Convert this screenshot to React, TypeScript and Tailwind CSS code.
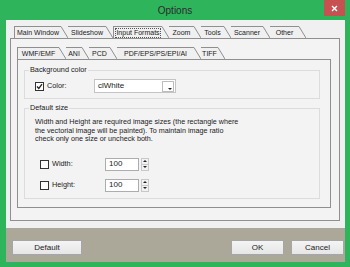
import React from "react";

const F = "font-['Liberation_Sans',Arial,sans-serif]";

function Tab({
  label,
  w,
  first,
  active,
  focus,
  slant = 7,
}: {
  label: string;
  w: number;
  first?: boolean;
  active?: boolean;
  focus?: boolean;
  slant?: number;
}) {
  return (
    <div className="flex h-[12px] shrink-0">
      <div
        style={{ width: w }}
        className={
          "h-full flex items-center justify-center border-t border-[#8e8f8f] bg-[#f0f0f0] whitespace-nowrap " +
          (first || active ? "border-l " : "")
        }
      >
        <span
          className={
            "leading-[8px] text-[7px] " +
            (focus ? "outline outline-1 outline-dotted outline-[#555]" : "")
          }
        >
          {label}
        </span>
      </div>
      <svg width={slant} height={12} className="block">
        <polygon points={`0,0 0,12 ${slant},12`} fill="#f0f0f0" />
        <line x1={0} y1={0.5} x2={slant} y2={12} stroke="#8e8f8f" strokeWidth={1} />
      </svg>
    </div>
  );
}

function CheckBox({ checked }: { checked?: boolean }) {
  return (
    <div className="w-[9px] h-[9px] border border-[#333] bg-white flex items-center justify-center shrink-0">
      {checked && (
        <svg width="7" height="7" viewBox="0 0 7 7">
          <path d="M1 3.5 L2.8 5.5 L6 1.2" stroke="#222" strokeWidth="1.3" fill="none" />
        </svg>
      )}
    </div>
  );
}

function SpinEdit({ value }: { value: string }) {
  return (
    <div className="flex items-center gap-[2px]">
      <div className="w-[34px] h-[13px] border border-[#abadb3] bg-white flex items-center pl-[3px] text-[8px]">
        {value}
      </div>
      <div className="flex flex-col w-[8px] h-[13px] border border-[#c8c8c8] bg-[#f2f2f2]">
        <div className="flex-1 flex items-center justify-center border-b border-[#c8c8c8]">
          <svg width="4" height="2"><polygon points="0,2 4,2 2,0" fill="#222" /></svg>
        </div>
        <div className="flex-1 flex items-center justify-center">
          <svg width="4" height="2"><polygon points="0,0 4,0 2,2" fill="#222" /></svg>
        </div>
      </div>
    </div>
  );
}

function Button({ label, w }: { label: string; w: number }) {
  return (
    <div
      style={{ width: w }}
      className="h-[15px] border border-[#a6a6a6] bg-gradient-to-b from-[#f4f4f4] to-[#e6e6e6] flex items-center justify-center text-[8px] text-[#222]"
    >
      {label}
    </div>
  );
}

export default function App() {
  return (
    <div className={`${F} w-[350px] h-[267px] bg-[#2eb55b] flex flex-col text-[7.3px] text-[#1a1a1a] overflow-hidden`}>
      {/* title bar */}
      <div className="h-[20px] relative flex items-center justify-center shrink-0">
        <span className="text-[10px] text-[#2b2b2b]">Options</span>
        <div className="absolute right-[5px] top-0 w-[21px] h-[16px] bg-[#c75050] flex items-center justify-center">
          <svg width="7" height="7" viewBox="0 0 7 7">
            <path d="M1 1 L6 6 M6 1 L1 6" stroke="#fff" strokeWidth="1.4" />
          </svg>
        </div>
      </div>

      <div className="mx-[6px] mr-[5px] mb-[5px] flex-1 flex flex-col">
        {/* upper area */}
        <div className="flex-1 bg-[#f0f0f0] flex flex-col pl-[4px] pr-[5px] pt-[6px] pb-[7px]">
          <div className="flex pl-[4px]">
            <Tab label="Main Window" w={47} first />
            <Tab label="Slideshow" w={38} />
            <Tab label="Input Formats" w={49} active focus />
            <Tab label="Zoom" w={25} />
            <Tab label="Tools" w={23} />
            <Tab label="Scanner" w={32} />
            <Tab label="Other" w={29} />
          </div>
          <div className="flex-1 border border-[#8e8f8f] bg-[#f3f3f3] flex flex-col pl-[6px] pr-[8px] pt-[8px] pb-[12px]">
            <div className="flex">
              <Tab label="WMF/EMF" w={42} first active />
              <Tab label="ANI" w={16} />
              <Tab label="PCD" w={21} />
              <Tab label="PDF/EPS/PS/EPI/AI" w={77} />
              <Tab label="TIFF" w={17} />
            </div>
            <div className="flex-1 border border-[#8e8f8f] bg-[#f3f3f3] flex flex-col pl-[6px] pr-[10px] pt-[5px]">
              <fieldset className="border border-[#dcdcdc] pl-[10px] h-[34px] shrink-0">
                <legend className="px-[1px] ml-[-6px] leading-[10px]">Background color</legend>
                <div className="flex items-center mt-[4px]">
                  <CheckBox checked />
                  <span className="ml-[3px] w-[47px]">Color:</span>
                  <div className="w-[82px] h-[14px] border border-[#c4c4c4] bg-white flex items-center pl-[3px] pr-[1px] text-[8px]">
                    <span className="flex-1">clWhite</span>
                    <div className="w-[12px] h-[11px] border border-[#bdbdbd] bg-white flex items-end justify-end p-[1px]">
                      <svg width="4" height="2"><polygon points="0,0 4,0 2,2" fill="#222" /></svg>
                    </div>
                  </div>
                </div>
              </fieldset>
              <fieldset className="border border-[#dcdcdc] pl-[10px] mt-[4px] h-[96px] shrink-0">
                <legend className="px-[1px] ml-[-6px] leading-[10px]">Default size</legend>
                <div className="leading-[8.5px] mt-[5px] text-[7.2px]">
                  Width and Height are required image sizes (the rectangle where
                  <br />
                  the vectorial image will be painted). To maintain image ratio
                  <br />
                  check only one size or uncheck both.
                </div>
                <div className="flex flex-col gap-[8px] pl-[5px] mt-[14px]">
                  <div className="flex items-center">
                    <CheckBox />
                    <span className="ml-[3px] w-[53px]">Width:</span>
                    <SpinEdit value="100" />
                  </div>
                  <div className="flex items-center">
                    <CheckBox />
                    <span className="ml-[3px] w-[53px]">Height:</span>
                    <SpinEdit value="100" />
                  </div>
                </div>
              </fieldset>
            </div>
          </div>
        </div>
        {/* bottom button strip */}
        <div className="h-[34px] bg-[#aca899] flex items-start justify-between pt-[12px] pl-[6px] pr-[1px] shrink-0">
          <Button label="Default" w={70} />
          <div className="flex gap-[7px]">
            <Button label="OK" w={53} />
            <Button label="Cancel" w={53} />
          </div>
        </div>
      </div>
    </div>
  );
}
